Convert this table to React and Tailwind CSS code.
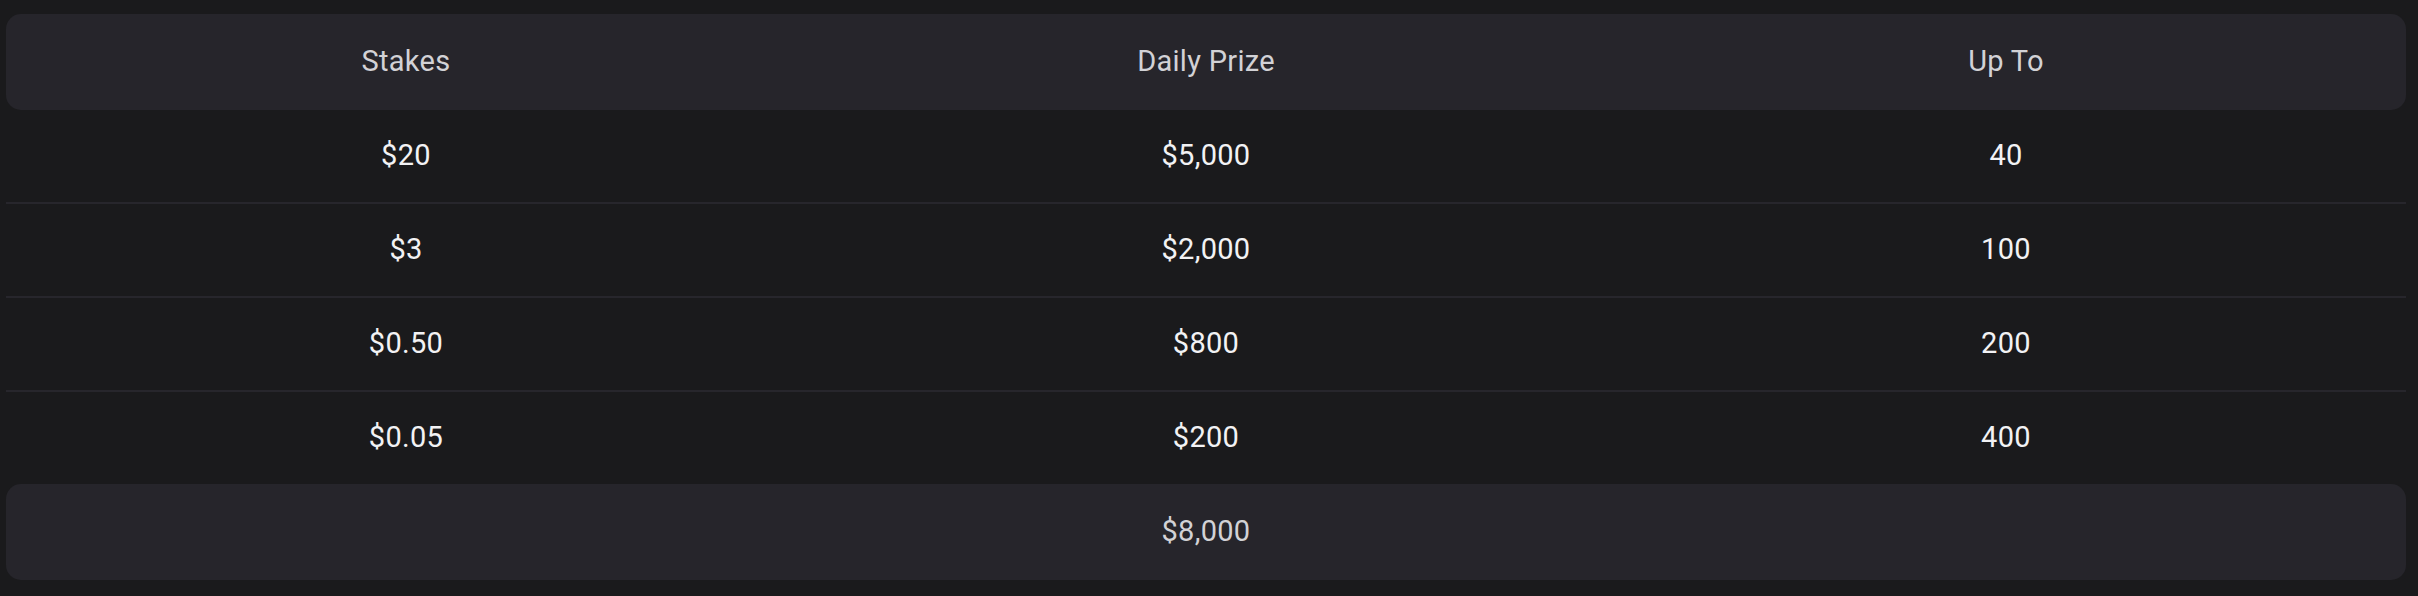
import React from "react";

const rows = [
  ["$20", "$5,000", "40"],
  ["$3", "$2,000", "100"],
  ["$0.50", "$800", "200"],
  ["$0.05", "$200", "400"],
];

export default function App() {
  return (
    <div
      className="w-full h-[596px] bg-[#1a1a1c] pt-[14px] pl-[6px] pr-[12px]"
      style={{ fontFamily: "Roboto, 'Liberation Sans', sans-serif" }}
    >
      <div className="flex flex-col">
        <div className="grid grid-cols-3 h-[96px] items-center rounded-[15px] bg-[#26252b] text-[29px] text-[#d2d2d6] tracking-[0.01em]">
          <div className="text-center">Stakes</div>
          <div className="text-center">Daily Prize</div>
          <div className="text-center">Up To</div>
        </div>
        {rows.map((r, i) => (
          <div
            key={i}
            className={
              i < rows.length - 1
                ? "grid grid-cols-3 h-[94px] items-center border-b-2 border-[#27262c] text-[29px] text-[#f2f2f4] tracking-[0.01em]"
                : "grid grid-cols-3 h-[92px] items-center text-[29px] text-[#f2f2f4] tracking-[0.01em]"
            }
          >
            <div className="text-center">{r[0]}</div>
            <div className="text-center">{r[1]}</div>
            <div className="text-center">{r[2]}</div>
          </div>
        ))}
        <div className="grid grid-cols-3 h-[96px] items-center rounded-[15px] bg-[#26252b] text-[29px] text-[#d2d2d6] tracking-[0.01em]">
          <div className="text-center"></div>
          <div className="text-center">$8,000</div>
          <div className="text-center"></div>
        </div>
      </div>
    </div>
  );
}
